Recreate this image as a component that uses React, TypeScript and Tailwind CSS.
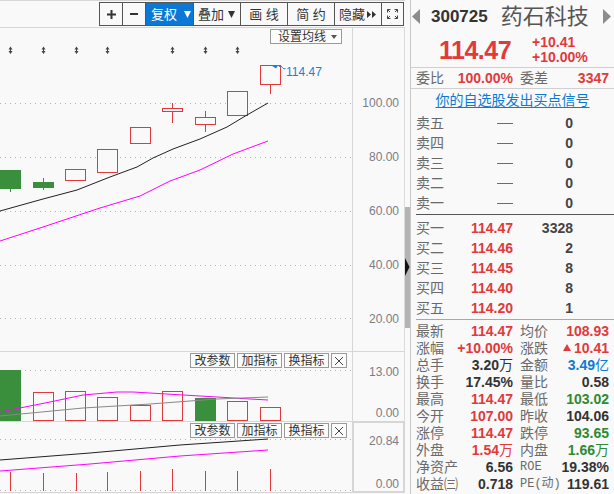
import React from 'react';

type Candle = { x: number; top: number; bot: number; wt?: number; wb?: number; up: boolean };

const RED = '#e2393c';
const GREEN = '#3a8f3c';
const BG = '#f9f9f9';

const candles: Candle[] = [
  { x: 0, top: 170, bot: 189, wt: 170, wb: 192, up: false },
  { x: 33, top: 182, bot: 188, wt: 178, wb: 190, up: false },
  { x: 65, top: 169, bot: 180, up: true },
  { x: 97, top: 149, bot: 172, up: true },
  { x: 130, top: 127, bot: 143, up: true },
  { x: 162, top: 108, bot: 111, wt: 103, wb: 123, up: true },
  { x: 195, top: 117, bot: 124, wt: 111, wb: 132, up: true },
  { x: 227, top: 91, bot: 115, up: true },
  { x: 260, top: 65, bot: 84, wt: 65, wb: 94, up: true },
];

const volumes = [
  { x: 0, top: 370, up: false },
  { x: 33, top: 392, up: true },
  { x: 65, top: 391, up: true },
  { x: 97, top: 397, up: true },
  { x: 130, top: 405, up: true },
  { x: 162, top: 391, up: true },
  { x: 195, top: 398, up: false },
  { x: 227, top: 401, up: true },
  { x: 260, top: 407, up: true },
];

const markers = [10, 43, 76, 107, 172, 205, 237];
const sticks = [
  [10, 472], [43, 473], [76, 473], [107, 472], [140, 471],
  [172, 469], [205, 471], [237, 471], [270, 469],
];

const Dotted = ({ y }: { y: number }) => (
  <line x1={0} x2={352} y1={y + 0.5} y2={y + 0.5} stroke="#b2b2b2" strokeDasharray="1 4" />
);

const CandleShape = ({ c }: { c: Candle }) => {
  const cx = c.x + 10.5;
  const color = c.up ? RED : GREEN;
  return (
    <g>
      {c.wt !== undefined && <line x1={cx} x2={cx} y1={c.wt} y2={c.wb} stroke={color} />}
      {c.up ? (
        <rect x={c.x + 0.5} y={c.top + 0.5} width={20} height={c.bot - c.top} fill={BG} stroke={RED} />
      ) : (
        <rect x={c.x} y={c.top} width={21} height={c.bot - c.top} fill={GREEN} />
      )}
    </g>
  );
};

const Tri = ({ color = 'currentColor', w = 7, h = 6 }: { color?: string; w?: number; h?: number }) => (
  <svg width={w} height={h} viewBox={`0 0 ${w} ${h}`} className="block shrink-0">
    <path d={`M0 0H${w}L${w / 2} ${h}Z`} fill={color} />
  </svg>
);

const PanelButtons = () => (
  <div className="absolute right-[5px] top-[1px] flex gap-[2px] text-[12px] leading-none text-[#333]">
    {['改参数', '加指标', '换指标'].map((t) => (
      <div key={t} className="flex h-[15px] w-[45px] items-center justify-center border border-[#9a9a9a] bg-[#fbfbfb]">
        {t}
      </div>
    ))}
    <div className="flex h-[15px] w-[16px] items-center justify-center border border-[#9a9a9a] bg-[#fbfbfb]">
      <svg width="10" height="10" viewBox="0 0 10 10">
        <path d="M1 1L9 9M9 1L1 9" stroke="#444" strokeWidth="1" />
      </svg>
    </div>
  </div>
);

type Stat = {
  l1: string; v1: string; u1?: string; c1: string;
  l2: string; v2: string; u2?: string; c2: string;
  mono?: boolean; tri?: boolean;
};

const stats: Stat[] = [
  { l1: '最新', v1: '114.47', c1: 'text-[#e2393c]', l2: '均价', v2: '108.93', c2: 'text-[#e2393c]' },
  { l1: '涨幅', v1: '+10.00%', c1: 'text-[#e2393c]', l2: '涨跌', v2: '10.41', c2: 'text-[#e2393c]', tri: true },
  { l1: '总手', v1: '3.20', u1: '万', c1: 'text-[#333]', l2: '金额', v2: '3.49', u2: '亿', c2: 'text-[#0b7bd4]' },
  { l1: '换手', v1: '17.45%', c1: 'text-[#333]', l2: '量比', v2: '0.58', c2: 'text-[#333]' },
  { l1: '最高', v1: '114.47', c1: 'text-[#e2393c]', l2: '最低', v2: '103.02', c2: 'text-[#2f8a32]' },
  { l1: '今开', v1: '107.00', c1: 'text-[#e2393c]', l2: '昨收', v2: '104.06', c2: 'text-[#333]' },
  { l1: '涨停', v1: '114.47', c1: 'text-[#e2393c]', l2: '跌停', v2: '93.65', c2: 'text-[#2f8a32]' },
  { l1: '外盘', v1: '1.54', u1: '万', c1: 'text-[#e2393c]', l2: '内盘', v2: '1.66', u2: '万', c2: 'text-[#2f8a32]' },
  { l1: '净资产', v1: '6.56', c1: 'text-[#333]', l2: 'ROE', v2: '19.38%', c2: 'text-[#333]', mono: true },
  { l1: '收益㈢', v1: '0.718', c1: 'text-[#333]', l2: 'PE(动)', v2: '119.61', c2: 'text-[#333]', mono: true },
];

const sells = ['卖五', '卖四', '卖三', '卖二', '卖一'];
const buys = [
  ['买一', '114.47', '3328'],
  ['买二', '114.46', '2'],
  ['买三', '114.45', '8'],
  ['买四', '114.40', '8'],
  ['买五', '114.20', '1'],
];

const App = () => {
  return (
    <div className="flex h-[494px] w-[614px] overflow-hidden bg-[#f9f9f9] font-['Liberation_Sans','Noto_Sans_CJK_SC',sans-serif] text-[#333]">
      {/* Chart column */}
      <div className="flex w-[405px] flex-col">
        {/* Toolbar */}
        <div className="flex h-[28px] shrink-0 justify-end border-y border-[#d6d6d6] pr-px">
          <div className="mt-px flex h-[24px] border border-[#555] text-[13px] leading-none text-[#333]">
            <div className="flex w-[22px] items-center justify-center">
              <svg width="9" height="9" viewBox="0 0 9 9"><path d="M0 3.5H9V5.5H0ZM3.5 0H5.5V9H3.5Z" fill="#333" /></svg>
            </div>
            <div className="flex w-[23px] items-center justify-center border-l border-[#555]">
              <svg width="8" height="2" viewBox="0 0 8 2"><rect width="8" height="2" fill="#333" /></svg>
            </div>
            <div className="flex w-[48px] items-center gap-[7px] border-l border-[#555] bg-[#0b78d5] pl-[5px] text-white">
              <span>复权</span>
              <Tri color="#fff" h={7} />
            </div>
            <div className="flex w-[47px] items-center gap-[4px] border-l border-[#555] pl-[4px]">
              <span>叠加</span>
              <Tri color="#333" h={7} />
            </div>
            <div className="flex w-[47px] items-center justify-center border-l border-[#555]">画 线</div>
            <div className="flex w-[47px] items-center justify-center border-l border-[#555]">简 约</div>
            <div className="flex w-[47px] items-center gap-[2px] border-l border-[#555] pl-[4px]">
              <span>隐藏</span>
              <svg width="9" height="7" viewBox="0 0 9 7"><path d="M0 0L4 3.5L0 7ZM5 0L9 3.5L5 7Z" fill="#333" /></svg>
            </div>
            <div className="flex w-[22px] items-center justify-center border-l border-[#555]">
              <svg width="13" height="12" viewBox="0 0 13 12" fill="none" stroke="#444" strokeWidth="1">
                <path d="M1.5 4.5V1.5H4.5M1.5 1.5L4 4" />
                <path d="M11.5 4.5V1.5H8.5M11.5 1.5L9 4" />
                <path d="M1.5 7.5V10.5H4.5M1.5 10.5L4 8" />
                <path d="M11.5 7.5V10.5H8.5M11.5 10.5L9 8" />
              </svg>
            </div>
          </div>
        </div>

        {/* Main K-line panel */}
        <div className="flex h-[324px] shrink-0 border-b border-[#d6d6d6]">
          <div className="relative w-[353px] border-r border-[#d6d6d6]">
            <svg width="352" height="323" viewBox="0 28 352 323" className="block">
              {[103, 157, 211, 265, 318].map((y) => <Dotted key={y} y={y} />)}
              {markers.map((x) => (
                <g key={x} fill="#444">
                  <path d={`M${x - 1.5} 49.5L${x + 0.5} 46.5L${x + 2.5} 49.5ZM${x - 1.5} 51L${x + 0.5} 54L${x + 2.5} 51Z`} />
                  <rect x={x} y={49} width={1} height={2} />
                </g>
              ))}
              {candles.map((c) => <CandleShape key={c.x} c={c} />)}
              <polyline
                points="0,211 43,199 77,190 110,177 137,167 153,158 173,149 200,139 227,127 247,115 268,103"
                fill="none" stroke="#222" strokeWidth="1"
              />
              <polyline
                points="0,241 43,227 100,208 140,196 170,181 200,170 233,154 268,141"
                fill="none" stroke="#ff00ff" strokeWidth="1"
              />
              <path d="M271.5 65.5H278L276 68.5Z" fill="#1a7fd6" />
              <path d="M279 66.5Q281 65 282.5 67.5T285.5 68.5" fill="none" stroke="#1a7fd6" strokeWidth="1" />
              <text x="286" y="75.5" fontSize="12" fill="#1a7fd6" fontFamily="Liberation Sans, sans-serif">114.47</text>
            </svg>
            <div className="absolute right-[10px] top-[1px] flex h-[15px] w-[72px] items-center border border-[#9a9a9a] bg-[#fdfdfd] pl-[7px] pr-[4px] text-[12px] leading-none text-[#333]">
              <span>设置均线</span>
              <span className="ml-auto"><Tri color="#555" w={6} h={4} /></span>
            </div>
          </div>
          <div className="flex w-[52px] flex-col items-end gap-[40px] border-r border-[#dcdcdc] pr-[5px] pt-[68px] text-[12px] leading-[14px] text-[#7c7c86]">
            <span>100.00</span>
            <span>80.00</span>
            <span>60.00</span>
            <span>40.00</span>
            <span>20.00</span>
          </div>
        </div>

        {/* Volume panel */}
        <div className="flex h-[70px] shrink-0 border-b border-[#d6d6d6]">
          <div className="relative w-[353px] border-r border-[#d6d6d6]">
            <svg width="352" height="69" viewBox="0 352 352 69" className="block">
              <Dotted y={370} />
              {volumes.map((v) =>
                v.up ? (
                  <rect key={v.x} x={v.x + 0.5} y={v.top + 0.5} width={20} height={420 - v.top} fill="none" stroke={RED} />
                ) : (
                  <rect key={v.x} x={v.x} y={v.top} width={21} height={421 - v.top} fill={GREEN} />
                )
              )}
              <polyline
                points="0,412 50,402 83,395 117,392 133,392 150,393 183,395 217,397 250,399 268,400"
                fill="none" stroke="#ff00ff" strokeWidth="1"
              />
              <polyline points="0,416 83,408 150,404 217,399 268,397" fill="none" stroke="#888" strokeWidth="1" />
            </svg>
            <PanelButtons />
          </div>
          <div className="flex w-[52px] flex-col items-end gap-[27px] border-r border-[#dcdcdc] pr-[5px] pt-[13px] text-[12px] leading-[14px] text-[#7c7c86]">
            <span>13.00</span>
            <span>0.00</span>
          </div>
        </div>

        {/* Indicator panel */}
        <div className="flex h-[71px] shrink-0 border-b border-[#d6d6d6]">
          <div className="relative w-[353px] border-r border-[#d6d6d6]">
            <svg width="352" height="70" viewBox="0 422 352 70" className="block">
              <Dotted y={439} />
              <Dotted y={490} />
              <polyline points="0,460 90,453 180,445 268,439" fill="none" stroke="#222" strokeWidth="1" />
              <polyline points="0,471 90,464 180,456 268,450" fill="none" stroke="#ff00ff" strokeWidth="1" />
              {sticks.map(([x, t]) => (
                <line key={x} x1={x + 0.5} x2={x + 0.5} y1={t} y2={491} stroke={RED} strokeWidth="1" />
              ))}
            </svg>
            <PanelButtons />
          </div>
          <div className="flex w-[52px] flex-col items-end gap-[29px] border-r border-[#d6d6d6] pr-[5px] pt-[12px] text-[12px] leading-[14px] text-[#7c7c86] shadow-[inset_1px_1px_0_#d6d6d6,inset_-1px_-1px_0_#d6d6d6]">
            <span>20.84</span>
            <span>0.00</span>
          </div>
        </div>
      </div>

      {/* Scroll strip */}
      <div className="w-[5px] shrink-0">
        <div className="mt-[207px] h-[121px] bg-[#b4b4b4] pt-[51px]">
          <svg width="5" height="18" viewBox="0 0 5 18" className="block">
            <path d="M0 0L4.5 9L0 18Z" fill="#111" />
          </svg>
        </div>
      </div>

      {/* Quote panel */}
      <div className="flex w-[204px] shrink-0 flex-col border-l border-[#c8c8c8]">
        <div className="flex h-[33px] shrink-0 items-center">
          <svg width="8" height="15" viewBox="0 0 8 15" className="ml-px block"><path d="M8 0V15L0 7.5Z" fill="#8c8c8c" /></svg>
          <span className="ml-[11px] text-[17px] font-bold leading-none text-[#333]">300725</span>
          <span className="ml-[13px] text-[22px] leading-none text-[#555]">药石科技</span>
          <svg width="8" height="15" viewBox="0 0 8 15" className="ml-auto mr-[3px] block"><path d="M0 0V15L8 7.5Z" fill="#8c8c8c" /></svg>
        </div>

        <div className="flex h-[35px] shrink-0 items-center border-b border-[#d0d0d0] pl-[28px] font-bold text-[#e2393c]">
          <span className="text-[25px] leading-none tracking-[-0.5px]">114.47</span>
          <div className="ml-[21px] flex flex-col text-[14px] leading-[15px]">
            <span>+10.41</span>
            <span>+10.00%</span>
          </div>
        </div>

        <div className="flex h-[21px] shrink-0 items-center border-b border-[#d0d0d0] pl-[5px] text-[14px] leading-none">
          <div className="flex w-[97px] items-center justify-between">
            <span className="text-[#6a6a6a]">委比</span>
            <span className="font-bold text-[#e2393c]">100.00%</span>
          </div>
          <div className="ml-[7px] flex w-[89px] items-center justify-between">
            <span className="text-[#6a6a6a]">委差</span>
            <span className="font-bold text-[#e2393c]">3347</span>
          </div>
        </div>

        <div className="flex h-[21px] shrink-0 items-center justify-center text-[14px] leading-none text-[#0b7bd4] underline underline-offset-2">
          你的自选股发出买点信号
        </div>

        <div className="ml-[5px] shrink-0 border-b border-[#555] pb-px pt-[3px] text-[14px] leading-none">
          {sells.map((s) => (
            <div key={s} className="flex h-[20px] items-center">
              <div className="flex w-[97px] items-center justify-between">
                <span className="text-[#6a6a6a]">{s}</span>
                <span className="h-px w-[16px] bg-[#3a8f3c]" />
              </div>
              <span className="w-[60px] text-right font-bold text-[#444]">0</span>
            </div>
          ))}
        </div>

        <div className="ml-[5px] shrink-0 border-b border-[#a8a8a8] pb-px pt-[3px] text-[14px] leading-none">
          {buys.map(([l, p, q]) => (
            <div key={l} className="flex h-[20px] items-center">
              <div className="flex w-[97px] items-center justify-between">
                <span className="text-[#6a6a6a]">{l}</span>
                <span className="font-bold text-[#e2393c]">{p}</span>
              </div>
              <span className="w-[60px] text-right font-bold text-[#444]">{q}</span>
            </div>
          ))}
        </div>

        <div className="ml-[5px] pt-[2px] text-[14px] leading-none">
          {stats.map((s) => (
            <div key={s.l1} className="flex h-[17px] items-center">
              <div className="flex w-[97px] items-center justify-between">
                <span className="text-[#6a6a6a]">{s.l1}</span>
                <span className={`font-bold ${s.c1}`}>
                  {s.v1}
                  {s.u1 && <span className="font-normal">{s.u1}</span>}
                </span>
              </div>
              <div className="ml-[7px] flex w-[89px] items-center justify-between">
                <span className={s.mono ? "font-['Liberation_Mono','Noto_Sans_CJK_SC',monospace] text-[12px] text-[#6a6a6a]" : 'text-[#6a6a6a]'}>
                  {s.l2}
                </span>
                <span className={`flex items-center font-bold ${s.c2}`}>
                  {s.tri && (
                    <svg width="8" height="7" viewBox="0 0 8 7" className="mr-[3px] block">
                      <path d="M0 7L4 0L8 7Z" fill="#e2393c" />
                    </svg>
                  )}
                  {s.v2}
                  {s.u2 && <span className="font-normal">{s.u2}</span>}
                </span>
              </div>
            </div>
          ))}
        </div>
      </div>
    </div>
  );
};

export default App;
